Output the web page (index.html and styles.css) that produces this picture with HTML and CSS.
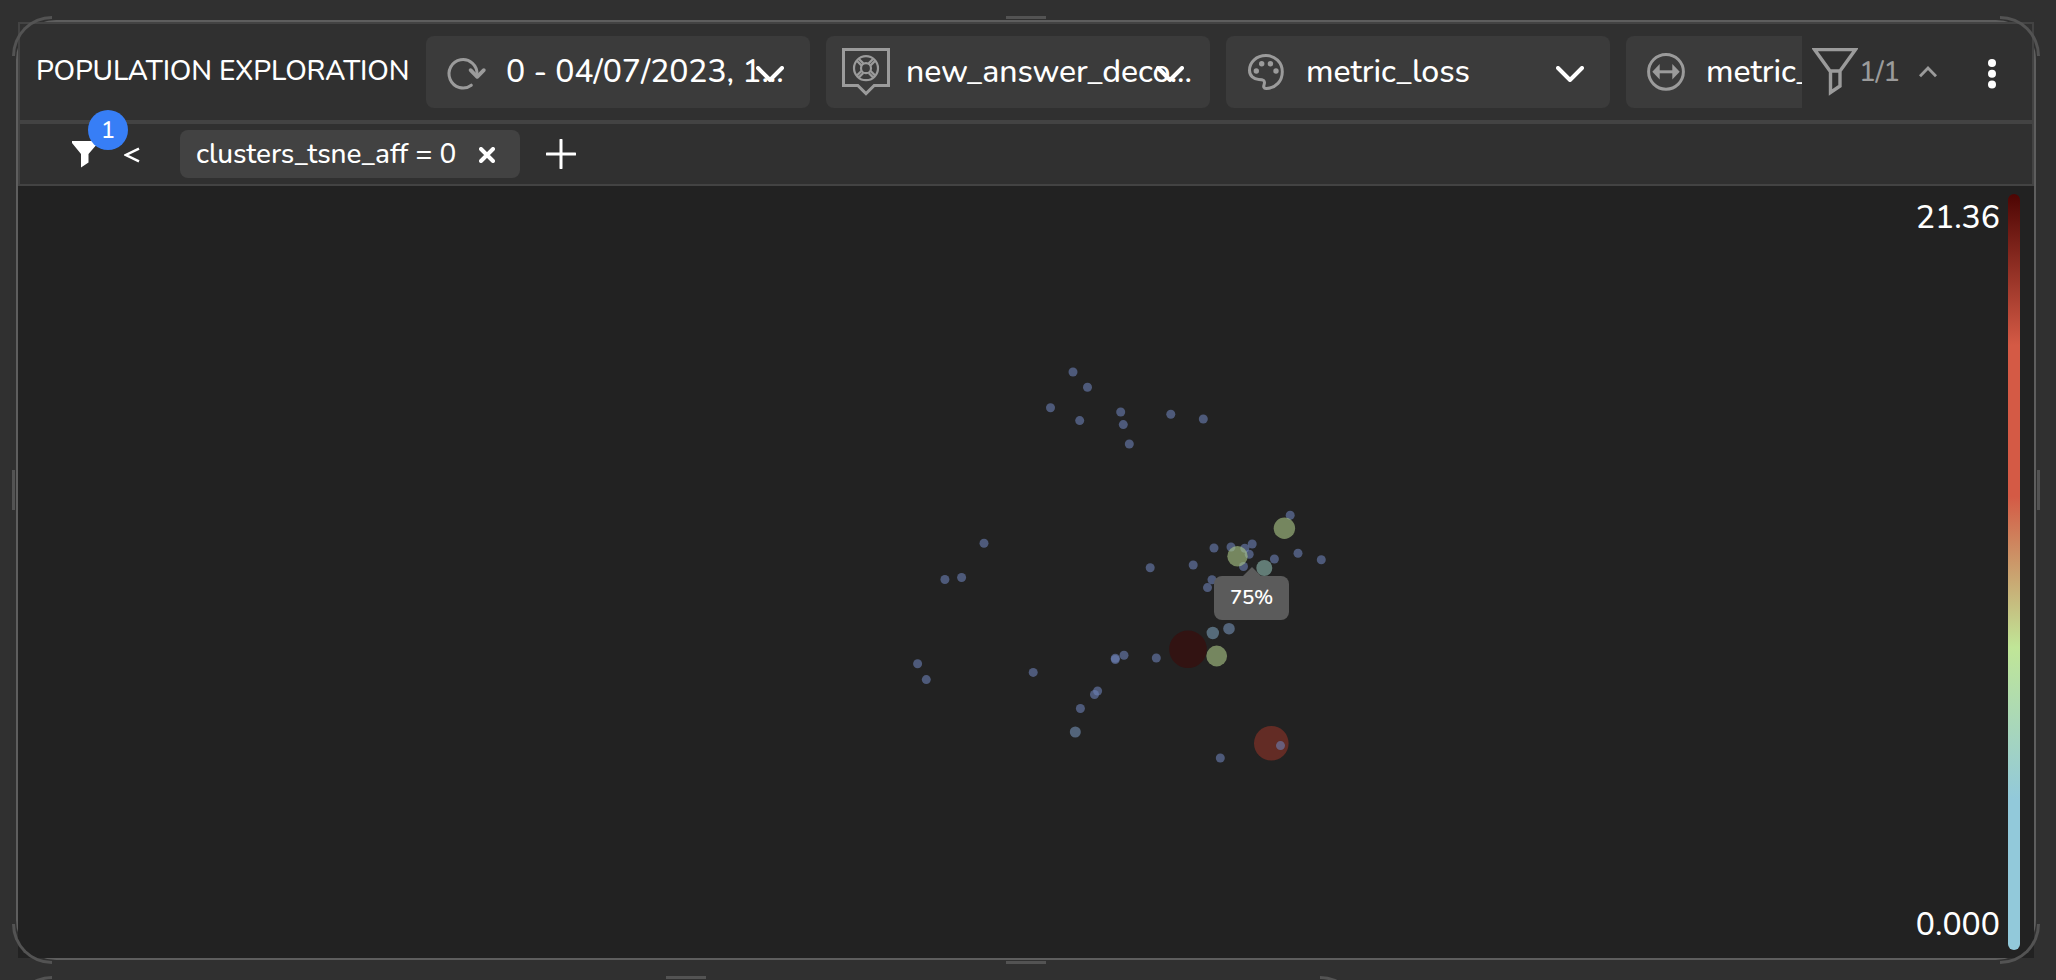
FILE: index.html
```html
<!DOCTYPE html>
<html lang="en">
<head>
<meta charset="utf-8">
<title>Population exploration</title>
<link rel="stylesheet" href="styles.css">
</head>
<body>
<main class="panel">
  <header class="toolbar">
    <h1 class="title">POPULATION EXPLORATION</h1>
    <div class="selects">
      <div class="select">
        <svg class="icon" viewBox="0 0 48 48"><path d="M29.3 37.2A14 14.2 0 1 1 35 26.5V28" stroke-width="3" stroke-linecap="round"/><path d="M28.6 22.2l6.6 6.6 6.6-6.6" stroke-width="3.8" stroke-linecap="round" stroke-linejoin="round"/></svg>
        <span class="label date">0 - 04/07/2023, 1...</span>
        <svg class="chevron" viewBox="0 0 28 16"><path d="M2 2l12 12 12-12"/></svg>
      </div>
      <div class="select">
        <svg class="icon" viewBox="0 0 48 48"><path d="M15.8 37.5H1.5v-36h45v36H32.2L24 45.6z" stroke-width="3"/><g stroke-width="2.2"><circle cx="24" cy="20.2" r="12"/><circle cx="24" cy="20.2" r="5"/><path d="M14.8 12.8l4.6 4.6M16.7 10.8l4.6 4.6M33.2 12.8l-4.6 4.6M31.3 10.8l-4.6 4.6M14.8 27.6l4.6-4.6M16.7 29.6l4.6-4.6M33.2 27.6l-4.6-4.6M31.3 29.6l-4.6-4.6"/></g></svg>
        <span class="label decoder">new_answer_deco...</span>
        <svg class="chevron" viewBox="0 0 28 16"><path d="M2 2l12 12 12-12"/></svg>
      </div>
      <div class="select">
        <svg class="icon" viewBox="0 0 48 48"><path d="M24 7.500C14.500 7.500 7.500 14 7.500 22.200c0 5.600 4.300 9.200 9.300 9.200 4.500 0 6.300 1.300 5.500 4.500-.4 1.500-.9 2.300-.5 3.200.4 1 1.300 1.400 2.700 1.300C34 40 40.300 33 40.300 23.700 40.300 14.500 33 7.500 24 7.500z" stroke-width="3"/><g class="solid"><circle cx="14.300" cy="23" r="2.700"/><circle cx="19.700" cy="15.800" r="2.700"/><circle cx="28.400" cy="15.800" r="2.700"/><circle cx="34" cy="23" r="2.700"/></g></svg>
        <span class="label metric">metric_loss</span>
        <svg class="chevron" viewBox="0 0 28 16"><path d="M2 2l12 12 12-12"/></svg>
      </div>
      <div class="select">
        <svg class="icon" viewBox="0 0 48 48"><circle cx="24" cy="23.800" r="17.400" stroke-width="3"/><path d="M15 23.800h18" stroke-width="3"/><path class="solid" d="M10.300 23.800l7.400-7.800v15.600zM37.700 23.800L30.300 16v15.600z"/></svg>
        <span class="label metric">metric_</span>
      </div>
    </div>
    <svg class="funnel" viewBox="0 0 46 48"><path d="M2.500 1.500h41L28 23H18zM18.500 22v22.500L28 38V22" stroke-width="3.400"/></svg>
    <span class="count">1/1</span>
    <svg class="caret" viewBox="0 0 20 12"><path d="M2 10.300L10 2l8 8.300"/></svg>
    <svg class="kebab" viewBox="0 0 8 30"><circle cx="4" cy="4" r="4"/><circle cx="4" cy="14.700" r="4"/><circle cx="4" cy="25.500" r="4"/></svg>
  </header>
  <section class="filters">
    <div class="filter-count">
      <svg class="funnel-solid" viewBox="0 0 26 27"><path d="M0 0h26v2L16.500 13v8.500L9 26.500V13L0 2z"/></svg>
      <span class="badge">1</span>
    </div>
    <svg class="less" viewBox="0 0 16 16"><path d="M15 1.700L2 8l13 6.300"/></svg>
    <div class="tag"><span class="tag-text">clusters_tsne_aff = 0</span><svg class="close" viewBox="0 0 16 16"><path d="M2 2l12 12M14 2L2 14"/></svg></div>
    <svg class="plus" viewBox="0 0 30 30"><path d="M1 15h28M15 1v28"/></svg>
  </section>
  <section class="plot">
    <svg class="scatter" viewBox="18 186 1886 772">
      <g class="low">
        <circle cx="1073" cy="372" r="4.500"/><circle cx="1087.500" cy="387.300" r="4.500"/><circle cx="1050.500" cy="407.800" r="4.500"/><circle cx="1079.700" cy="420.600" r="4.500"/><circle cx="1120.700" cy="412" r="4.500"/><circle cx="1123.300" cy="424.600" r="4.500"/><circle cx="1129.300" cy="444" r="4.500"/><circle cx="1170.800" cy="414.300" r="4.500"/><circle cx="1203.300" cy="419" r="4.500"/>
        <circle cx="984" cy="543.300" r="4.500"/><circle cx="944.900" cy="579.500" r="4.500"/><circle cx="961.600" cy="577.500" r="4.500"/><circle cx="917.600" cy="663.800" r="4.500"/><circle cx="926.300" cy="679.600" r="4.500"/><circle cx="1033.200" cy="672.400" r="4.500"/><circle cx="1115.300" cy="658.300" r="4.500"/><circle cx="1115.300" cy="659.500" r="4.500"/><circle cx="1124" cy="655.200" r="4.500"/><circle cx="1156.300" cy="658" r="4.500"/><circle cx="1094.500" cy="694.500" r="4.500"/><circle cx="1097.600" cy="691" r="4.500"/><circle cx="1080.400" cy="708.500" r="4.500"/>
        <circle cx="1150.200" cy="567.800" r="4.500"/><circle cx="1193.200" cy="565" r="4.500"/><circle cx="1214" cy="548" r="4.500"/><circle cx="1231" cy="547" r="4.500"/><circle cx="1244.800" cy="548.300" r="4.500"/><circle cx="1252.200" cy="544" r="4.500"/><circle cx="1249.200" cy="554.300" r="4.500"/><circle cx="1243.500" cy="566.500" r="4.500"/><circle cx="1274.400" cy="559" r="4.500"/><circle cx="1298" cy="553.300" r="4.500"/><circle cx="1321.300" cy="559.800" r="4.500"/><circle cx="1290.200" cy="515.300" r="4.500"/><circle cx="1212" cy="579.800" r="4.500"/><circle cx="1207.500" cy="587.600" r="4.500"/><circle cx="1220.300" cy="758" r="4.500"/>
      </g>
      <g class="mild"><circle cx="1075.300" cy="732" r="5.500"/><circle cx="1229" cy="628.700" r="5.800"/></g>
      <circle class="cool" cx="1212.800" cy="633" r="6.200"/>
      <circle class="teal" cx="1264.300" cy="568" r="8"/>
      <g class="mid"><circle cx="1284.400" cy="528.200" r="10.700"/><circle cx="1237.500" cy="556.200" r="10.200"/><circle cx="1216.700" cy="656" r="10.400"/></g>
      <circle class="peak" cx="1188" cy="649.300" r="18.800"/>
      <circle class="high" cx="1271.300" cy="743.300" r="17.300"/>
      <g class="low"><circle cx="1280.500" cy="745.600" r="4.500"/></g>
    </svg>
    <div class="scale-labels"><span>21.36</span><span class="zero">0.000</span></div>
    <div class="scale"></div>
    <div class="tooltip">75%</div>
  </section>
  <i class="grip corner tl"></i><i class="grip corner tr"></i><i class="grip corner bl"></i><i class="grip corner br"></i>
  <i class="grip edge top"></i><i class="grip edge bottom"></i><i class="grip side left"></i><i class="grip side right"></i>
</main>
<div class="next-panel">
  <i class="grip corner tl"></i><i class="grip edge top"></i><i class="grip corner tr"></i>
</div>
</body>
</html>
```
FILE: styles.css
```css
* { box-sizing: border-box; }
body {
  margin: 0;
  padding: 20px 20px 0 16px;
  height: 980px;
  overflow: hidden;
  background: #303030;
  color: #fff;
  font-family: Nunito, Lato, sans-serif;
  font-weight: 500;
}
svg { display: block; flex: none; fill: none; stroke: #fff; }
.panel {
  position: relative;
  display: flex;
  flex-direction: column;
  height: 940px;
  border: 2px solid #5e5e5e;
  border-radius: 40px;
}
.toolbar {
  display: flex;
  align-items: center;
  height: 100px;
  flex: none;
  border: 2px solid #434343;
  background: #303030;
}
.title {
  flex: none;
  width: 389px;
  margin: 0 17px 2px 0;
  padding-left: 16px;
  font-size: 28px;
  line-height: 40px;
  font-weight: 500;
  white-space: nowrap;
  letter-spacing: -0.15px;
}
.selects {
  display: flex;
  gap: 16px;
  width: 1376px;
  flex: none;
  overflow: hidden;
}
.select {
  position: relative;
  display: flex;
  align-items: center;
  flex: none;
  width: 384px;
  height: 72px;
  padding: 0 16px;
  gap: 16px;
  border-radius: 8px;
  background: #3b3b3b;
}
.icon { width: 48px; height: 48px; stroke: #9b9b9b; }
.icon .solid { fill: #9b9b9b; stroke: none; }
.label { font-size: 32px; line-height: 44px; white-space: nowrap; letter-spacing: -0.08px; }
.chevron {
  position: absolute;
  right: 26px;
  top: 30px;
  width: 28px;
  height: 16px;
  stroke-width: 4;
  stroke-linecap: round;
  stroke-linejoin: round;
}
.funnel { width: 46px; height: 48px; margin-left: 10px; stroke: #9b9b9b; }
.count {
  width: 41px;
  margin-left: 1px;
  font-size: 28px;
  line-height: 40px;
  letter-spacing: -0.3px;
  color: #9b9b9b;
}
.caret { width: 20px; height: 12px; margin-left: 18px; stroke: #9b9b9b; stroke-width: 2.8; }
.kebab { width: 8px; height: 30px; margin: 4px 0 0 50px; fill: #fff; stroke: none; }
.filters {
  display: flex;
  align-items: center;
  height: 64px;
  flex: none;
  padding: 0 52px;
  border: 2px solid #434343;
  background: #303030;
}
.filter-count { position: relative; width: 26px; height: 27px; }
.funnel-solid { width: 26px; height: 27px; fill: #fff; stroke: none; }
.badge {
  position: absolute;
  left: 16px;
  top: -31px;
  width: 40px;
  height: 40px;
  border-radius: 50%;
  background: #377ef6;
  font-size: 24px;
  line-height: 40px;
  text-align: center;
}
.less { width: 16px; height: 16px; margin: 2px 0 0 26px; stroke-width: 2.5; }
.tag {
  display: flex;
  align-items: center;
  justify-content: space-between;
  width: 340px;
  height: 48px;
  margin-left: 40px;
  padding: 0 25px 0 16px;
  border-radius: 8px;
  background: #424242;
}
.tag-text { font-size: 28px; line-height: 40px; white-space: nowrap; letter-spacing: -0.1px; }
.close { width: 16px; height: 16px; margin-top: 2px; stroke-width: 4; stroke-linecap: round; }
.plus { width: 30px; height: 30px; margin: 0 0 0 26px; stroke-width: 3; stroke-linecap: round; }
.plot {
  position: relative;
  display: flex;
  flex: 1;
  padding-right: 14px;
  background: #222;
}
.scatter { width: 1886px; height: 772px; stroke: none; }
.low { fill: rgba(108, 129, 182, .6); }
.mild { fill: rgba(117, 145, 182, .6); }
.cool { fill: rgba(122, 157, 182, .6); }
.teal { fill: rgba(142, 185, 175, .6); }
.mid { fill: rgba(174, 201, 137, .6); }
.peak { fill: #321312; }
.high { fill: #632c25; }
.scale-labels {
  display: flex;
  flex-direction: column;
  justify-content: space-between;
  align-items: flex-end;
  flex: 1;
  padding: 10px 8px 11px 0;
  font-size: 32px;
  line-height: 44px;
}
.scale {
  width: 12px;
  margin: 8px 0;
  border-radius: 6px;
  background: linear-gradient(#4d0503, #d45a45 20%, #d45a45 40%, #c0e697 60%, #92c9da 80%, #92c9da);
}
.tooltip {
  position: absolute;
  left: 1196px;
  top: 390px;
  width: 75px;
  height: 44px;
  border-radius: 8px;
  background: #5b5b5b;
  font-size: 20.5px;
  line-height: 42px;
  font-weight: 600;
  letter-spacing: -0.2px;
  text-align: center;
}
.tooltip::before {
  content: "";
  position: absolute;
  left: 28px;
  top: -9px;
  border: solid transparent;
  border-width: 0 10px 10px;
  border-bottom-color: #5b5b5b;
}
.grip { position: absolute; border: 0 solid #535353; }
.corner { width: 40px; height: 40px; }
.tl { left: -6px; top: -6px; border-width: 3px 0 0 3px; border-top-left-radius: 40px; }
.tr { right: -6px; top: -6px; border-width: 3px 3px 0 0; border-top-right-radius: 40px; }
.bl { left: -6px; bottom: -6px; border-width: 0 0 3px 3px; border-bottom-left-radius: 40px; }
.br { right: -6px; bottom: -6px; border-width: 0 3px 3px 0; border-bottom-right-radius: 40px; }
.edge { left: calc(50% - 20px); width: 40px; height: 3px; background: #535353; }
.side { top: calc(50% - 20px); width: 3px; height: 40px; background: #535353; }
.edge.top { top: -6px; }
.edge.bottom { bottom: -6px; }
.side.left { left: -6px; }
.side.right { right: -6px; }
.next-panel { position: relative; width: 1336px; height: 4px; margin: 22px 0 0 2px; }
```
